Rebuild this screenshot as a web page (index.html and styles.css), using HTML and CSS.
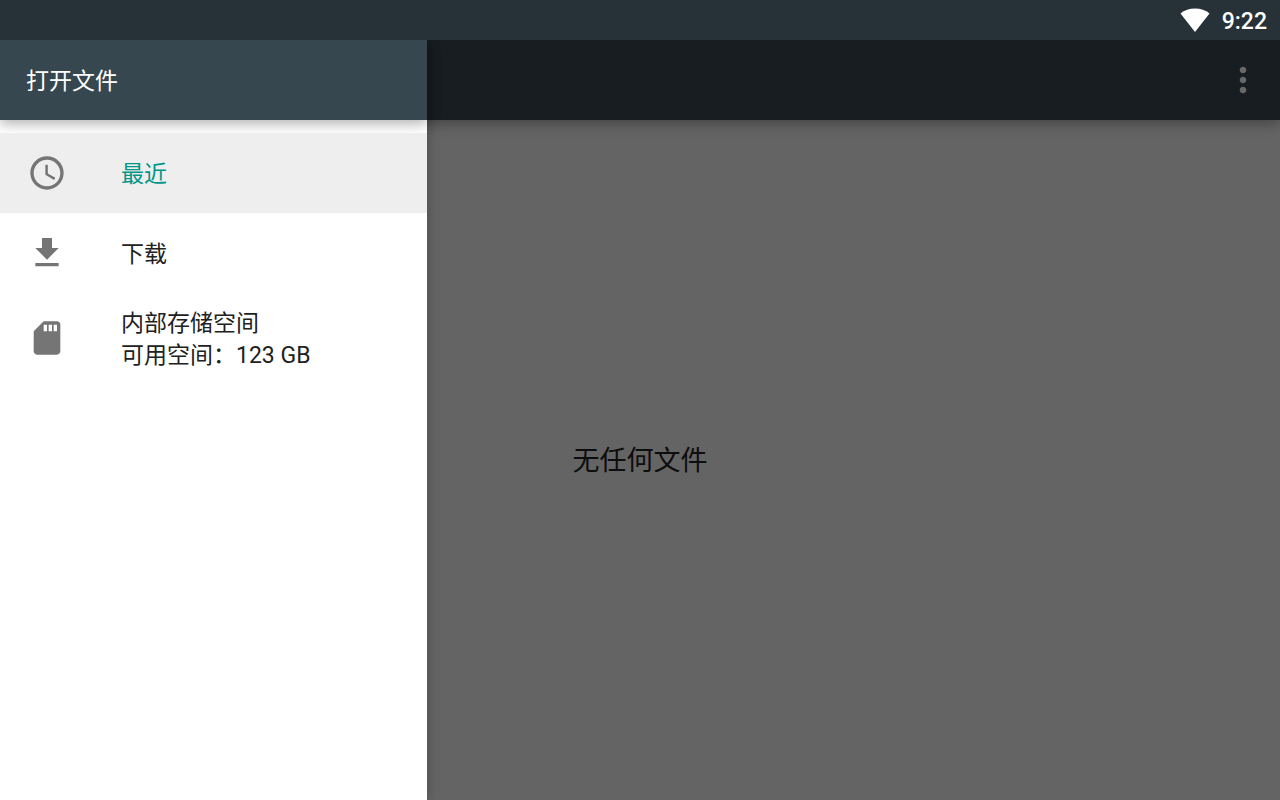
FILE: index.html
```html
<!DOCTYPE html>
<html lang="zh-CN">
<head>
    <meta charset="UTF-8">
    <meta name="viewport" content="width=device-width, initial-scale=1.0">
    <title>打开文件</title>
    <link rel="stylesheet" href="styles.css">
</head>
<body>
    <div class="status-bar">
        <svg class="wifi" viewBox="0 0 30 24" aria-hidden="true">
            <path d="M15 24L0.500 5.500Q6.500 0.500 15 0.500T29.500 5.500z"/>
        </svg>
        <time class="clock">9:22</time>
    </div>

    <div class="screen">
        <header class="app-bar">
            <button class="more" aria-label="更多选项">
                <svg viewBox="0 0 24 24" aria-hidden="true">
                    <path d="M12 8c1.100 0 2-.9 2-2s-.9-2-2-2-2 .9-2 2 .9 2 2 2zm0 2c-1.100 0-2 .9-2 2s.9 2 2 2 2-.9 2-2-.9-2-2-2zm0 6c-1.100 0-2 .9-2 2s.9 2 2 2 2-.9 2-2-.9-2-2-2z"/>
                </svg>
            </button>
        </header>
        <main class="content">
            <p class="empty">无任何文件</p>
        </main>

        <aside class="drawer">
            <h1 class="drawer-title">打开文件</h1>
            <nav class="roots">
                <a class="root active" href="#recent">
                    <svg class="icon" viewBox="0 0 24 24" aria-hidden="true">
                        <path d="M11.990 2C6.470 2 2 6.480 2 12s4.470 10 9.990 10C17.520 22 22 17.520 22 12S17.520 2 11.990 2zM12 20c-4.420 0-8-3.580-8-8s3.580-8 8-8 8 3.580 8 8-3.580 8-8 8zm.5-13H11v6l5.250 3.150.75-1.230-4.500-2.670z"/>
                    </svg>
                    <span class="label">最近</span>
                </a>
                <a class="root" href="#downloads">
                    <svg class="icon" viewBox="0 0 24 24" aria-hidden="true">
                        <path d="M19 9h-4V3H9v6H5l7 7 7-7zM5 18v2h14v-2H5z"/>
                    </svg>
                    <span class="label">下载</span>
                </a>
                <a class="root storage" href="#storage">
                    <svg class="icon" viewBox="0 0 24 24" aria-hidden="true">
                        <path d="M18 2h-8L4.020 8 4 20c0 1.100.9 2 2 2h12c1.100 0 2-.9 2-2V4c0-1.100-.9-2-2-2zm-6 6h-2V4h2v4zm3 0h-2V4h2v4zm3 0h-2V4h2v4z"/>
                    </svg>
                    <span class="label">内部存储空间<br>可用空间：123 GB</span>
                </a>
            </nav>
        </aside>
    </div>
</body>
</html>
```

FILE: styles.css
```css
* {
    box-sizing: border-box;
}
body {
    margin: 0;
    min-height: 100vh;
    display: flex;
    flex-direction: column;
    font-family: Roboto, "Noto Sans CJK SC", sans-serif;
    font-size: 23px;
    line-height: 32px;
    color: #212121;
    background-color: #646464;
}
.status-bar {
    height: 40px;
    padding: 0 13px;
    display: flex;
    align-items: center;
    justify-content: flex-end;
    gap: 12px;
    background-color: #263238;
    color: #fff;
}
.wifi {
    width: 30px;
    height: 24px;
    fill: #fff;
}
.clock,
.label,
.drawer-title {
    padding-top: 4px;
}
.clock {
    font-weight: 500;
}
.screen {
    position: relative;
    flex: 1;
    display: flex;
    flex-direction: column;
    overflow: hidden;
}
.app-bar {
    height: 80px;
    padding: 0 17px;
    display: flex;
    align-items: center;
    justify-content: flex-end;
    background-color: #171d20;
    box-shadow: 0 4px 12px rgba(0, 0, 0, 0.3);
}
.more {
    width: 40px;
    height: 40px;
    padding: 0;
    border: none;
    background: none;
    cursor: pointer;
}
.more svg {
    display: block;
    width: 40px;
    height: 40px;
    fill: #686868;
}
.content {
    flex: 1;
    display: flex;
    align-items: center;
    justify-content: center;
}
.empty {
    margin: 0;
    padding-top: 2px;
    font-size: 27px;
    color: #0d0d0d;
}

/* Drawer slides over the app bar and the file list */
.drawer {
    position: absolute;
    top: 0;
    bottom: 0;
    left: 0;
    width: 33.33%;
    background-color: #fff;
    box-shadow: 0 0 12px rgba(0, 0, 0, 0.25);
}
.drawer-title {
    height: 80px;
    margin: 0;
    padding-left: 26px;
    padding-right: 26px;
    display: flex;
    align-items: center;
    font-size: 23px;
    font-weight: normal;
    color: #fff;
    background-color: #37474f;
    box-shadow: 0 4px 12px rgba(0, 0, 0, 0.3);
}
.roots {
    padding-top: 13px;
}
.root {
    min-height: 80px;
    padding: 0 27px;
    display: flex;
    align-items: center;
    gap: 54px;
    color: #212121;
    text-decoration: none;
}
.storage {
    min-height: 90px;
}
.active {
    background-color: #eee;
    color: #009688;
}
.icon {
    flex: none;
    width: 40px;
    height: 40px;
    fill: #757575;
}
```
